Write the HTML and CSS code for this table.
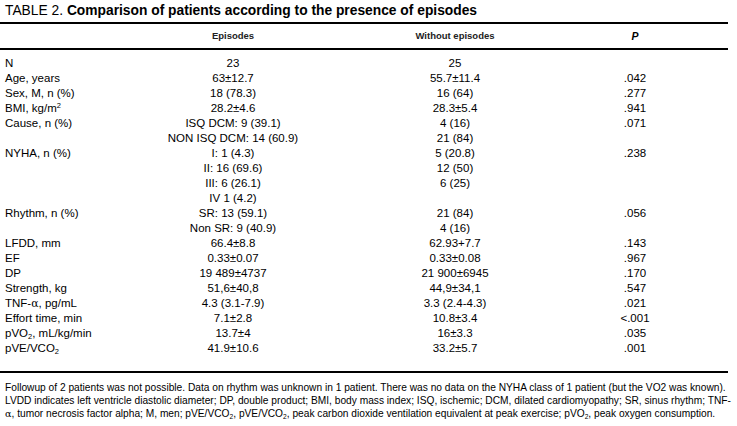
FILE: index.html
```html
<!DOCTYPE html>
<html>
<head>
<meta charset="utf-8">
<link rel="stylesheet" href="styles.css">
</head>
<body>
<div class="page">
  <h1 class="title"><span class="title-label">TABLE 2.</span> <b>Comparison of patients according to the presence of episodes</b></h1>
  <div class="grid head">
    <div class="c1"></div>
    <div class="c">Episodes</div>
    <div class="c">Without episodes</div>
    <div class="c p">P</div>
  </div>
  <div class="grid body">
    <div class="c1">N</div><div class="c">23</div><div class="c">25</div><div class="c"></div>
    <div class="c1">Age, years</div><div class="c">63±12.7</div><div class="c">55.7±11.4</div><div class="c">.042</div>
    <div class="c1">Sex, M, n (%)</div><div class="c">18 (78.3)</div><div class="c">16 (64)</div><div class="c">.277</div>
    <div class="c1">BMI, kg/m<sup>2</sup></div><div class="c">28.2±4.6</div><div class="c">28.3±5.4</div><div class="c">.941</div>
    <div class="c1">Cause, n (%)</div><div class="c">ISQ DCM: 9 (39.1)</div><div class="c">4 (16)</div><div class="c">.071</div>
    <div class="c1"></div><div class="c">NON ISQ DCM: 14 (60.9)</div><div class="c">21 (84)</div><div class="c"></div>
    <div class="c1">NYHA, n (%)</div><div class="c">I: 1 (4.3)</div><div class="c">5 (20.8)</div><div class="c">.238</div>
    <div class="c1"></div><div class="c">II: 16 (69.6)</div><div class="c">12 (50)</div><div class="c"></div>
    <div class="c1"></div><div class="c">III: 6 (26.1)</div><div class="c">6 (25)</div><div class="c"></div>
    <div class="c1"></div><div class="c">IV 1 (4.2)</div><div class="c"></div><div class="c"></div>
    <div class="c1">Rhythm, n (%)</div><div class="c">SR: 13 (59.1)</div><div class="c">21 (84)</div><div class="c">.056</div>
    <div class="c1"></div><div class="c">Non SR: 9 (40.9)</div><div class="c">4 (16)</div><div class="c"></div>
    <div class="c1">LFDD, mm</div><div class="c">66.4±8.8</div><div class="c">62.93+7.7</div><div class="c">.143</div>
    <div class="c1">EF</div><div class="c">0.33±0.07</div><div class="c">0.33±0.08</div><div class="c">.967</div>
    <div class="c1">DP</div><div class="c">19 489±4737</div><div class="c">21 900±6945</div><div class="c">.170</div>
    <div class="c1">Strength, kg</div><div class="c">51,6±40,8</div><div class="c">44,9±34,1</div><div class="c">.547</div>
    <div class="c1">TNF-<span class="greek">α</span>, pg/mL</div><div class="c">4.3 (3.1-7.9)</div><div class="c">3.3 (2.4-4.3)</div><div class="c">.021</div>
    <div class="c1">Effort time, min</div><div class="c">7.1±2.8</div><div class="c">10.8±3.4</div><div class="c">&lt;.001</div>
    <div class="c1">pVO<sub>2</sub>, mL/kg/min</div><div class="c">13.7±4</div><div class="c">16±3.3</div><div class="c">.035</div>
    <div class="c1">pVE/VCO<sub>2</sub></div><div class="c">41.9±10.6</div><div class="c">33.2±5.7</div><div class="c">.001</div>
  </div>
  <p class="note">Followup of 2 patients was not possible. Data on rhythm was unknown in 1 patient. There was no data on the NYHA class of 1 patient (but the VO2 was known).<br>LVDD indicates left ventricle diastolic diameter; DP, double product; BMI, body mass index; ISQ, ischemic; DCM, dilated cardiomyopathy; SR, sinus rhythm; TNF-<br><span class="greek">α</span>, tumor necrosis factor alpha; M, men; pVE/VCO<sub>2</sub>, pVE/VCO<sub>2</sub>, peak carbon dioxide ventilation equivalent at peak exercise; pVO<sub>2</sub>, peak oxygen consumption.</p>
</div>
</body>
</html>
```

FILE: styles.css
```css
html, body {
  margin: 0;
  padding: 0;
  background: #fff;
}
body {
  font-family: "Liberation Sans", Arial, sans-serif;
  color: #000;
}
.page {
  width: 728px;
}
.title {
  margin: 0;
  padding: 2px 0 0 5px;
  height: 20px;
  line-height: 17px;
  font-size: 13.8px;
  font-weight: normal;
  border-bottom: 2px solid #000;
  box-sizing: content-box;
  white-space: nowrap;
}
.title b {
  font-weight: bold;
}
.grid {
  display: grid;
  grid-template-columns: 140px 186px 258px 102px;
}
.head {
  height: 24px;
  line-height: 24px;
  font-size: 9.5px;
  font-weight: bold;
  color: #222;
  border-bottom: 2px solid #000;
}
.head .p {
  font-style: italic;
  font-size: 10.5px;
  color: #000;
}
.body {
  grid-auto-rows: 15px;
  padding: 6px 0 15px;
  font-size: 11.5px;
  line-height: 15px;
  border-bottom: 2px solid #000;
}
.c1 {
  padding-left: 5px;
  white-space: nowrap;
}
.c {
  text-align: center;
  white-space: nowrap;
}
sub, sup {
  font-size: 65%;
  line-height: 0;
}
sub {
  vertical-align: -2px;
}
sup {
  vertical-align: 4px;
}
.greek {
  font-family: "DejaVu Serif", "Liberation Serif", serif;
  font-size: 95%;
}
.note {
  margin: 0;
  padding: 8px 0 0 5px;
  font-size: 10.2px;
  line-height: 13px;
  white-space: nowrap;
}
```
